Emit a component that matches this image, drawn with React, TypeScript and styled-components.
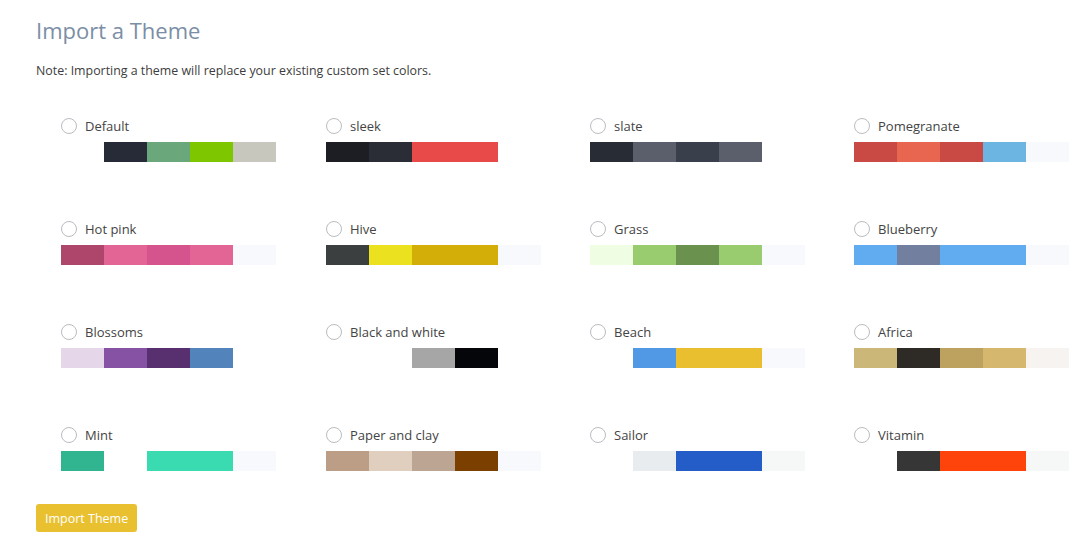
import React from "react";
import styled, { createGlobalStyle } from "styled-components";

const Global = createGlobalStyle`
  html, body { margin: 0; padding: 0; background: #fff; }
  body { font-family: "Open Sans", "Noto Sans", sans-serif; color: #444; }
`;

const Page = styled.div`
  padding: 14px 36px 0 36px;
`;

const Title = styled.h2`
  margin: 0;
  font-size: 22px;
  font-weight: 400;
  line-height: 32px;
  color: #7b8ea5;
`;

const Note = styled.p`
  margin: 17px 0 0 0;
  font-size: 12.4px;
  line-height: 16px;
  color: #3d3d3d;
`;

const Grid = styled.div`
  display: grid;
  grid-template-columns: 265px 264px 264px 264px;
  row-gap: 57px;
  margin-top: 37px;
  padding-left: 25px;
`;

const Cell = styled.div`
  display: flex;
  flex-direction: column;
  gap: 6px;
`;

const Label = styled.label`
  display: flex;
  align-items: center;
  gap: 8px;
  height: 20px;
  font-size: 13px;
  color: #444;
  cursor: pointer;
`;

const Radio = styled.span`
  width: 14px;
  height: 14px;
  border: 1px solid #b9bcc1;
  border-radius: 50%;
  background: #fff;
  flex: none;
`;

const Swatches = styled.div`
  display: flex;
  width: 215px;
  height: 20px;
`;

const Swatch = styled.div<{ $c: string | null }>`
  flex: 1;
  background: ${(p) => p.$c ?? "transparent"};
`;

const Button = styled.button`
  margin-top: 33px;
  height: 28px;
  padding: 0 9px;
  border: none;
  border-radius: 3px;
  background: #e9c130;
  color: #fff;
  font-family: "Open Sans", sans-serif;
  font-size: 12.5px;
  cursor: pointer;
`;

const L = "#f8f9fc";

const themes: { name: string; colors: (string | null)[] }[] = [
  { name: "Default", colors: [null, "#272a37", "#6aa77a", "#7ec700", "#c8c7be"] },
  { name: "sleek", colors: ["#1c1e24", "#2a2d35", "#e84a4a", "#e84a4a", null] },
  { name: "slate", colors: ["#282c35", "#5a5f6b", "#3a404b", "#5a5f6b", null] },
  { name: "Pomegranate", colors: ["#c94a44", "#e8664f", "#c94a44", "#6cb5e3", L] },
  { name: "Hot pink", colors: ["#ae456b", "#e36595", "#d6548d", "#e36595", L] },
  { name: "Hive", colors: ["#3b3f40", "#ece11f", "#d4ae08", "#d4ae08", L] },
  { name: "Grass", colors: ["#effde2", "#98cc6f", "#6b914e", "#98cc6f", L] },
  { name: "Blueberry", colors: ["#61abf0", "#727f9e", "#61abf0", "#61abf0", L] },
  { name: "Blossoms", colors: ["#e5d6e9", "#8653a4", "#582f6f", "#5383bb", null] },
  { name: "Black and white", colors: [null, null, "#a6a6a6", "#050609", null] },
  { name: "Beach", colors: [null, "#5199e5", "#e9bf2f", "#e9bf2f", L] },
  { name: "Africa", colors: ["#cbb879", "#2e2b27", "#bca15f", "#d5b86d", "#f6f3f0"] },
  { name: "Mint", colors: ["#31b591", null, "#3adbb0", "#3adbb0", L] },
  { name: "Paper and clay", colors: ["#bc9e87", "#e0cfbe", "#bca592", "#7b3f00", L] },
  { name: "Sailor", colors: [null, "#e9ecef", "#245dc8", "#245dc8", "#f6f7f7"] },
  { name: "Vitamin", colors: [null, "#363636", "#ff440b", "#ff440b", "#f6f7f7"] },
];

export default function App() {
  return (
    <Page>
      <Global />
      <Title>Import a Theme</Title>
      <Note>Note: Importing a theme will replace your existing custom set colors.</Note>
      <Grid>
        {themes.map((t) => (
          <Cell key={t.name}>
            <Label>
              <Radio />
              {t.name}
            </Label>
            <Swatches>
              {t.colors.map((c, i) => (
                <Swatch key={i} $c={c} />
              ))}
            </Swatches>
          </Cell>
        ))}
      </Grid>
      <Button>Import Theme</Button>
    </Page>
  );
}
